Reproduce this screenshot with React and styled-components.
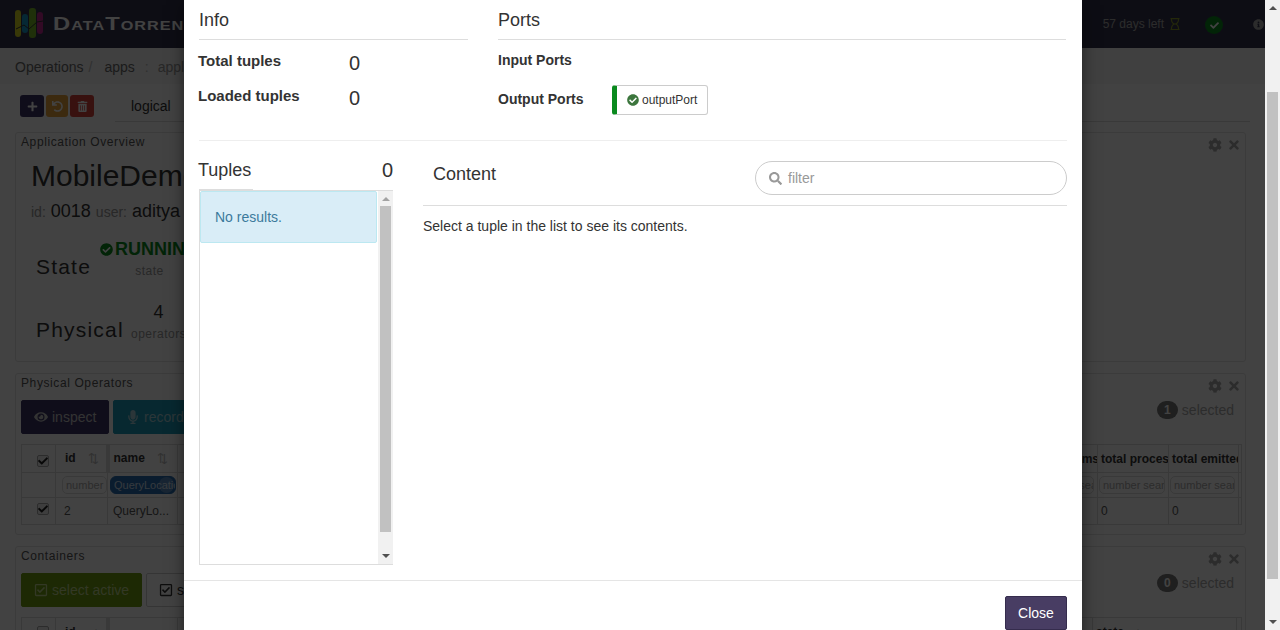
import React from 'react';
import styled, { createGlobalStyle } from 'styled-components';
import {
	FaPlus,
	FaUndo,
	FaTrashAlt,
	FaEye,
	FaMicrophone,
	FaCheckCircle,
	FaCog,
	FaTimes,
	FaCheck,
	FaRegCheckSquare,
	FaRegHourglass,
	FaInfoCircle,
	FaSearch,
} from 'react-icons/fa';

const GlobalStyle = createGlobalStyle`
	html, body {
		margin: 0;
		height: 100%;
		overflow: hidden;
	}
	body {
		font-family: "Liberation Sans", Arial, sans-serif;
		font-size: 14px;
		color: #333;
		background: #fff;
	}
	* {
		box-sizing: border-box;
	}
`;

const Screen = styled.div`
	display: flex;
	width: 1280px;
	height: 630px;
	overflow: hidden;
`;

const Viewport = styled.div`
	position: relative;
	flex: 1;
	height: 630px;
	overflow: hidden;
	background: #fff;
`;

const Scrollbar = styled.div`
	width: 15px;
	height: 630px;
	background: #f1f1f1;
	display: flex;
	flex-direction: column;
	align-items: center;
`;

const ScrollThumb = styled.div`
	width: ${(p) => p.$w}px;
	height: ${(p) => p.$h}px;
	margin-top: ${(p) => p.$top}px;
	background: #c1c1c1;
`;

const Arrow = styled.div`
	width: 0;
	height: 0;
	border-left: 4px solid transparent;
	border-right: 4px solid transparent;
	margin-top: ${(p) => p.$top}px;
	${(p) =>
		p.$down
			? `border-top: 4px solid ${p.$color || '#505050'};`
			: `border-bottom: 4px solid ${p.$color || '#505050'};`}
`;

const Header = styled.header`
	height: 48px;
	background: #35354f;
	display: flex;
	align-items: center;
	padding-left: 15px;
	color: #fff;
`;

const LogoText = styled.span`
	display: inline-block;
	width: 130px;
	margin-left: 9px;
	font-size: 19px;
	font-weight: 700;
	font-variant: small-caps;
	letter-spacing: 0.8px;
	color: #fff;
	white-space: nowrap;
	transform: scaleX(1.25);
	transform-origin: left center;
`;

const HeaderRight = styled.div`
	margin-left: auto;
	display: flex;
	align-items: center;
	font-size: 12px;
	color: #aaa;
	padding-right: 1px;
`;

const Hourglass = styled(FaRegHourglass)`
	font-size: 12px;
	margin-left: 5px;
	color: #8a9a2a;
`;

const OkBadge = styled.span`
	width: 18px;
	height: 18px;
	margin: 2px 30px 0 24px;
	border-radius: 50%;
	background: #0a8a1e;
	display: flex;
	align-items: center;
	justify-content: center;
	font-size: 9px;
	color: #fff;
`;

const Crumbs = styled.nav`
	height: 36px;
	padding: 2px 0 0 15px;
	background: #f5f5f5;
	display: flex;
	align-items: center;
	font-size: 14px;
	color: #6a6a6a;
`;

const CrumbSep = styled.span`
	color: #bbb;
	margin: 0 ${(p) => p.$right}px 0 ${(p) => p.$left}px;
`;

const CrumbCurrent = styled.span`
	color: #999;
`;

const Toolbar = styled.div`
	display: flex;
	align-items: flex-start;
	height: 27px;
	margin: 11px 15px 0 20px;
	gap: 2px;
`;

const IconButton = styled.button`
	width: ${(p) => p.$w}px;
	height: 22px;
	padding: 0;
	border: 0;
	border-radius: 3px;
	background: ${(p) => p.$bg};
	color: #fff;
	font-size: 11px;
	display: flex;
	align-items: center;
	justify-content: center;
`;

const TabBar = styled.div`
	flex: 1;
	height: 27px;
	margin-left: 19px;
	padding-left: 16px;
	line-height: 22px;
	border-bottom: 1px solid #ddd;
	color: #333;
`;

const Panel = styled.section`
	position: relative;
	width: 1231px;
	margin: ${(p) => p.$top}px 0 0 15px;
	height: ${(p) => p.$h}px;
	padding: 0 5px;
	border: 1px solid #e4e4e4;
	border-radius: 3px;
	background: #fff;
	overflow: hidden;
`;

const PanelTitle = styled.h4`
	margin: 0;
	padding-top: 1px;
	font-size: 12px;
	line-height: 16px;
	font-weight: 400;
	letter-spacing: 0.6px;
	color: #555;
`;

const PanelTools = styled.div`
	position: absolute;
	top: 5px;
	right: 4px;
	display: flex;
	gap: 5px;
	font-size: 14px;
	color: #aaa;
`;

const Selected = styled.div`
	position: absolute;
	top: 27px;
	right: 11px;
	display: flex;
	align-items: center;
	gap: 4px;
	font-size: 14px;
	color: #aaa;
`;

const CountBadge = styled.span`
	width: 21px;
	height: 18px;
	border-radius: 9px;
	background: #777;
	color: #fff;
	font-size: 12px;
	font-weight: 700;
	display: flex;
	align-items: center;
	justify-content: center;
`;

const AppName = styled.h1`
	margin: 8px 0 0 10px;
	font-size: 30px;
	line-height: 36px;
	font-weight: 400;
	white-space: nowrap;
	color: #333;
`;

const AppMeta = styled.div`
	margin: 6px 0 0 10px;
	font-size: 18px;
	line-height: 22px;
	color: #333;

	small {
		font-size: 14px;
		color: #999;
	}
`;

const StatRow = styled.div`
	display: flex;
	align-items: flex-end;
	margin: ${(p) => p.$top}px 0 0 15px;
`;

const StatName = styled.div`
	width: ${(p) => p.$w}px;
	font-size: 21px;
	line-height: 24px;
	letter-spacing: 1.2px;
	color: #333;
`;

const StatCell = styled.div`
	display: flex;
	flex-direction: column;
	align-items: center;
	color: #333;
	font-size: 18px;
	line-height: 20px;

	small {
		margin-top: 4px;
		font-size: 12px;
		line-height: 16px;
		letter-spacing: 0.5px;
		color: #999;
	}
`;

const RunningState = styled.span`
	display: flex;
	align-items: center;
	gap: 2px;
	font-size: 18px;
	font-weight: 700;
	color: #0a8a1e;

	svg {
		font-size: 13px;
	}
`;

const ActionRow = styled.div`
	display: flex;
	gap: 4px;
	margin-top: 9px;
`;

const ActionButton = styled.button`
	height: 34px;
	width: ${(p) => p.$w}px;
	padding: 0 12px;
	border: 1px solid ${(p) => p.$border || p.$bg};
	border-radius: 2px;
	background: ${(p) => p.$bg};
	color: ${(p) => p.$color || '#c4c4c4'};
	font: 14px "Liberation Sans", Arial, sans-serif;
	display: flex;
	align-items: center;
	gap: 4px;
	white-space: nowrap;
	overflow: hidden;

	svg {
		flex: none;
		font-size: 14px;
	}
`;

const Grid = styled.table`
	width: 1220px;
	margin-top: ${(p) => p.$top}px;
	border-collapse: collapse;
	table-layout: fixed;
	font-size: 12px;
	color: #555;

	td, th {
		border: 1px solid #ddd;
		padding: 0 3px;
		text-align: left;
		white-space: nowrap;
		overflow: hidden;
	}

	th:nth-child(2) {
		padding-left: 9px;
		border-right-width: 4px;
	}
	td:nth-child(2) {
		padding-left: 8px;
	}
	th:nth-child(3) {
		padding-left: 4px;
	}
	td:nth-child(3) {
		padding-left: 5px;
	}

	th {
		height: 28px;
		font-weight: 700;
		color: #333;
	}
	td {
		height: 25px;
	}
	tbody td {
		height: 27px;
	}
`;

const HeadCell = styled.span`
	display: flex;
	justify-content: space-between;
	padding-right: ${(p) => p.$pad || 4}px;

	i {
		font-style: normal;
		font-weight: 400;
		font-size: 13px;
		color: #bbb;
	}
`;

const GridCheck = styled.span`
	display: inline-flex;
	width: 12px;
	height: 12px;
	margin: ${(p) => p.$top || 0}px 0 ${(p) => p.$bottom || 0}px 12px;
	vertical-align: middle;
	border: 1px solid #aaa;
	border-radius: 2px;
	background: #eee;
	color: #222;
	font-size: 10px;
	align-items: center;
	justify-content: center;
`;

const SearchBox = styled.span`
	display: block;
	height: 18px;
	line-height: 16px;
	padding-left: 3px;
	margin: 0 ${(p) => p.$right ?? -3}px 0 -2px;
	border: 1px solid #ddd;
	border-radius: 5px;
	font-size: 11px;
	color: #aaa;
	overflow: hidden;
`;

const ActiveSearch = styled(SearchBox)`
	position: relative;
	margin: 0 -2px 0 -3px;
	background: #2a6db0;
	border-color: #2a6db0;
	border-radius: 6px;
	color: #cde;

	&::after {
		content: '';
		position: absolute;
		top: 0;
		right: 1px;
		width: 15px;
		height: 16px;
		border-radius: 50%;
		background: rgba(255, 255, 255, 0.25);
	}
`;

const Backdrop = styled.div`
	position: absolute;
	inset: 0;
	background: rgba(0, 0, 0, 0.74);
`;

const Modal = styled.div`
	position: absolute;
	top: 0;
	left: 184px;
	width: 898px;
	height: 660px;
	background: #fff;
	box-shadow: 0 5px 15px rgba(0, 0, 0, 0.5);
	color: #333;
`;

const ModalTop = styled.div`
	display: flex;
	height: 141px;
	margin: 0 15px;
	border-bottom: 1px solid #eee;
`;

const InfoColumn = styled.div`
	width: 269px;
	flex: none;
`;

const PortsColumn = styled.div`
	margin: 0 1px 0 30px;
	flex: 1;
`;

const SectionHeading = styled.h3`
	margin: 0;
	font-size: 18px;
	font-weight: 400;
	line-height: 20px;
	padding: 10px 0 9px 0;
	border-bottom: 1px solid #ddd;
	color: #333;
`;

const InfoRow = styled.div`
	display: flex;
	align-items: center;
	height: 35px;
	margin-left: -1px;

	&:first-of-type {
		margin-top: 5px;
	}
`;

const InfoLabel = styled.span`
	width: 151px;
	font-size: 15px;
	font-weight: 700;
	margin-top: -4px;
`;

const InfoValue = styled.span`
	font-size: 20px;
	line-height: 22px;
`;

const PortRow = styled.div`
	display: flex;
	align-items: center;
	margin-top: ${(p) => p.$top}px;
	min-height: 20px;
`;

const PortLabel = styled.span`
	width: 114px;
	margin-top: ${(p) => p.$lift || 0}px;
	font-size: 14px;
	font-weight: 700;
`;

const PortChip = styled.span`
	display: flex;
	align-items: center;
	gap: 3px;
	width: 96px;
	height: 30px;
	padding-left: 10px;
	border: 1px solid #ccc;
	border-left: 5px solid #0a8a1e;
	border-radius: 3px;
	font-size: 12px;
	color: #333;

	svg {
		font-size: 12px;
		color: #3c763d;
	}
`;

const ModalBody = styled.div`
	display: flex;
	height: 439px;
	margin: 0 15px;
	padding-top: 19px;
`;

const TuplesColumn = styled.div`
	width: 194px;
	flex: none;
`;

const TuplesHead = styled.div`
	display: flex;
	justify-content: space-between;
	align-items: center;
	height: 20px;
	margin-left: -1px;
	font-size: 18px;
	line-height: 20px;

	b {
		font-size: 20px;
		font-weight: 400;
	}
`;

const TuplesList = styled.div`
	display: flex;
	height: 375px;
	margin-top: 10px;
	border: 1px solid #ddd;
	border-right: 0;
	position: relative;

	&::before {
		content: '';
		position: absolute;
		top: -2px;
		left: -1px;
		width: 54px;
		height: 1px;
		background: #ddd;
	}
`;

const ListItems = styled.div`
	flex: 1;
	padding-right: 1px;
`;

const EmptyAlert = styled.div`
	height: 52px;
	padding-left: 14px;
	display: flex;
	align-items: center;
	background: #d9edf7;
	border: 1px solid #bce8f1;
	border-radius: 2px;
	color: #3c7a9c;
	font-size: 14px;
`;

const ListScroll = styled.div`
	width: 15px;
	background: #f1f1f1;
	display: flex;
	flex-direction: column;
	align-items: center;
`;

const ContentColumn = styled.div`
	margin-left: 30px;
	flex: 1;
`;

const ContentHead = styled.div`
	display: flex;
	justify-content: space-between;
	align-items: flex-start;
	height: 45px;
	margin-top: 1px;
	border-bottom: 1px solid #ddd;
`;

const ContentTitle = styled.h3`
	margin: 3px 0 0 10px;
	font-size: 18px;
	line-height: 20px;
	font-weight: 400;
`;

const FilterBox = styled.label`
	width: 312px;
	height: 34px;
	display: flex;
	align-items: center;
	gap: 6px;
	padding-left: 13px;
	border: 1px solid #ccc;
	border-radius: 17px;
	color: #999;
	font-size: 14px;

	svg {
		font-size: 13px;
	}
`;

const ContentHint = styled.p`
	margin: 12px 0 0;
	font-size: 14px;
	line-height: 16px;
`;

const ModalFooter = styled.footer`
	display: flex;
	justify-content: flex-end;
	padding: 15px 15px;
	border-top: 1px solid #e5e5e5;
`;

const CloseButton = styled.button`
	width: 62px;
	height: 34px;
	padding: 0;
	border: 1px solid #352c4d;
	border-radius: 2px;
	background: #483d63;
	color: #fff;
	font: 14px "Liberation Sans", Arial, sans-serif;
`;

const operatorCols = [34, 52, 70, 856, 64, 71, 70, 3];
const containerCols = [34, 52, 70, 915, 144, 5];

const Columns = ({ widths }) => (
	<colgroup>
		{widths.map((w, i) => (
			<col key={i} style={{ width: w }} />
		))}
	</colgroup>
);

const App = () => (
	<Screen>
		<GlobalStyle />
		<Viewport>
			<Header>
				<svg width="29" height="32" viewBox="0 0 29 32">
					<rect x="0" y="2" width="6" height="27" rx="3" fill="#d8d820" />
					<rect x="7" y="6" width="6" height="19" rx="3" fill="#1a9bc8" />
					<rect x="14" y="0" width="7" height="30" rx="3" fill="#7ab82a" />
					<rect x="22" y="4" width="6" height="22" rx="3" fill="#c02a90" />
					<path d="M1 21 L9 17 L14 21 L22 14 L28 13" fill="none" stroke="#333" strokeWidth="1" />
				</svg>
				<LogoText>DataTorrent</LogoText>
				<HeaderRight>
					57 days left
					<Hourglass />
					<OkBadge>
						<FaCheck />
					</OkBadge>
					<FaInfoCircle size={11} />
				</HeaderRight>
			</Header>
			<Crumbs>
				Operations
				<CrumbSep $left={5} $right={12}>/</CrumbSep>
				apps
				<CrumbSep $left={10} $right={9}>:</CrumbSep>
				<CrumbCurrent>application</CrumbCurrent>
			</Crumbs>
			<Toolbar>
				<IconButton $bg="#3c3566" $w={24}>
					<FaPlus />
				</IconButton>
				<IconButton $bg="#e8a33c" $w={22}>
					<FaUndo />
				</IconButton>
				<IconButton $bg="#d9423c" $w={24}>
					<FaTrashAlt />
				</IconButton>
				<TabBar>logical</TabBar>
			</Toolbar>
			<Panel $top={10} $h={230}>
				<PanelTitle>Application Overview</PanelTitle>
				<PanelTools>
					<FaCog />
					<FaTimes />
				</PanelTools>
				<AppName>MobileDemo</AppName>
				<AppMeta>
					<small>id:</small> 0018 <small>user:</small> aditya
				</AppMeta>
				<StatRow $top={16}>
					<StatName $w={64}>State</StatName>
					<StatCell>
						<RunningState>
							<FaCheckCircle />
							RUNNING
						</RunningState>
						<small>state</small>
					</StatCell>
				</StatRow>
				<StatRow $top={23}>
					<StatName $w={95}>Physical</StatName>
					<StatCell>
						4<small>operators</small>
					</StatCell>
				</StatRow>
			</Panel>
			<Panel $top={11} $h={162}>
				<PanelTitle>Physical Operators</PanelTitle>
				<PanelTools>
					<FaCog />
					<FaTimes />
				</PanelTools>
				<Selected>
					<CountBadge>1</CountBadge>
					selected
				</Selected>
				<ActionRow>
					<ActionButton $bg="#3c3566" $w={88}>
						<FaEye />
						inspect
					</ActionButton>
					<ActionButton $bg="#1c9ab8" $color="#a5d0da" $w={120}>
						<FaMicrophone />
						record a sample
					</ActionButton>
				</ActionRow>
				<Grid $top={10}>
					<Columns widths={operatorCols} />
					<thead>
						<tr>
							<th>
								<GridCheck $top={4}>
									<FaCheck />
								</GridCheck>
							</th>
							<th>
								<HeadCell>
									id<i>⇅</i>
								</HeadCell>
							</th>
							<th>
								<HeadCell $pad={6}>
									name<i>⇅</i>
								</HeadCell>
							</th>
							<th />
							<th>latency ms</th>
							<th>total processed</th>
							<th>total emitted</th>
							<th />
						</tr>
						<tr>
							<td />
							<td>
								<SearchBox>number search</SearchBox>
							</td>
							<td>
								<ActiveSearch>QueryLocation</ActiveSearch>
							</td>
							<td />
							<td>
								<SearchBox $right={0}>number search</SearchBox>
							</td>
							<td>
								<SearchBox $right={0}>number search</SearchBox>
							</td>
							<td>
								<SearchBox $right={0}>number search</SearchBox>
							</td>
							<td />
						</tr>
					</thead>
					<tbody>
						<tr>
							<td>
								<GridCheck $bottom={4}>
									<FaCheck />
								</GridCheck>
							</td>
							<td>2</td>
							<td>QueryLo...</td>
							<td />
							<td />
							<td>0</td>
							<td>0</td>
							<td />
						</tr>
					</tbody>
				</Grid>
			</Panel>
			<Panel $top={11} $h={100}>
				<PanelTitle>Containers</PanelTitle>
				<PanelTools>
					<FaCog />
					<FaTimes />
				</PanelTools>
				<Selected>
					<CountBadge>0</CountBadge>
					selected
				</Selected>
				<ActionRow>
					<ActionButton $bg="#6f9e12" $color="#c3d890" $w={121}>
						<FaRegCheckSquare />
						select active
					</ActionButton>
					<ActionButton $bg="#fff" $border="#ccc" $color="#333" $w={120}>
						<FaRegCheckSquare />
						select
					</ActionButton>
				</ActionRow>
				<Grid $top={10}>
					<Columns widths={containerCols} />
					<thead>
						<tr>
							<th>
								<GridCheck />
							</th>
							<th>
								<HeadCell>
									id<span>▴</span>
								</HeadCell>
							</th>
							<th />
							<th />
							<th>
								<HeadCell $pad={92}>
									state<span>▴</span>
								</HeadCell>
							</th>
							<th />
						</tr>
					</thead>
				</Grid>
			</Panel>
			<Backdrop />
			<Modal>
				<ModalTop>
					<InfoColumn>
						<SectionHeading>Info</SectionHeading>
						<InfoRow>
							<InfoLabel>Total tuples</InfoLabel>
							<InfoValue>0</InfoValue>
						</InfoRow>
						<InfoRow>
							<InfoLabel>Loaded tuples</InfoLabel>
							<InfoValue>0</InfoValue>
						</InfoRow>
					</InfoColumn>
					<PortsColumn>
						<SectionHeading>Ports</SectionHeading>
						<PortRow $top={10}>
							<PortLabel>Input Ports</PortLabel>
						</PortRow>
						<PortRow $top={15}>
							<PortLabel $lift={-2}>Output Ports</PortLabel>
							<PortChip>
								<FaCheckCircle />
								outputPort
							</PortChip>
						</PortRow>
					</PortsColumn>
				</ModalTop>
				<ModalBody>
					<TuplesColumn>
						<TuplesHead>
							Tuples
							<b>0</b>
						</TuplesHead>
						<TuplesList>
							<ListItems>
								<EmptyAlert>No results.</EmptyAlert>
							</ListItems>
							<ListScroll>
								<Arrow $top={6} $color="#a3a3a3" />
								<ScrollThumb $w={11} $h={326} $top={5} />
								<Arrow $top={22} $down />
							</ListScroll>
						</TuplesList>
					</TuplesColumn>
					<ContentColumn>
						<ContentHead>
							<ContentTitle>Content</ContentTitle>
							<FilterBox>
								<FaSearch />
								filter
							</FilterBox>
						</ContentHead>
						<ContentHint>Select a tuple in the list to see its contents.</ContentHint>
					</ContentColumn>
				</ModalBody>
				<ModalFooter>
					<CloseButton>Close</CloseButton>
				</ModalFooter>
			</Modal>
		</Viewport>
		<Scrollbar>
			<Arrow $top={6} />
			<ScrollThumb $w={11} $h={487} $top={82} />
			<Arrow $top={41} $down />
		</Scrollbar>
	</Screen>
);

export default App;
